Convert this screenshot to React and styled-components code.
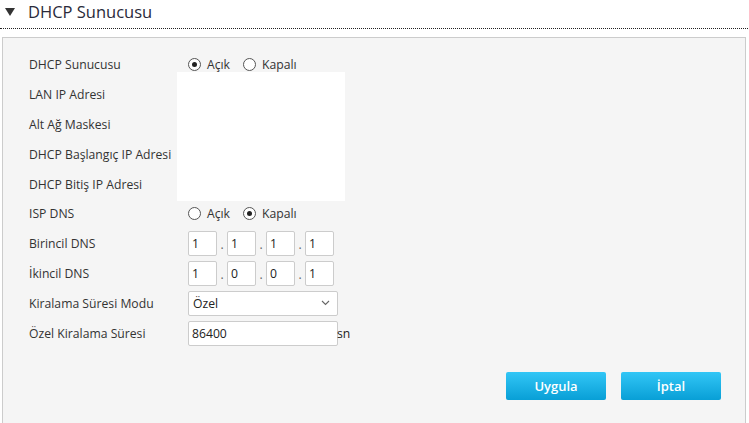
import React from 'react';
import styled, { createGlobalStyle } from 'styled-components';

const TEXT = '#333333';
const BORDER = '#cccccc';

const GlobalStyle = createGlobalStyle`
	html, body {
		margin: 0;
		padding: 0;
		background: #ffffff;
		font-family: "Open Sans", "Noto Sans", "Liberation Sans", sans-serif;
		color: ${TEXT};
	}
`;

const rows = [
	{ label: 'DHCP Sunucusu', type: 'radio', on: true },
	{ label: 'LAN IP Adresi', type: 'hidden' },
	{ label: 'Alt Ağ Maskesi', type: 'hidden' },
	{ label: 'DHCP Başlangıç IP Adresi', type: 'hidden' },
	{ label: 'DHCP Bitiş IP Adresi', type: 'hidden' },
	{ label: 'ISP DNS', type: 'radio', on: false },
	{ label: 'Birincil DNS', type: 'ip', value: ['1', '1', '1', '1'] },
	{ label: 'İkincil DNS', type: 'ip', value: ['1', '0', '0', '1'] },
	{ label: 'Kiralama Süresi Modu', type: 'select', value: 'Özel' },
	{ label: 'Özel Kiralama Süresi', type: 'text', value: '86400', unit: 'sn' }
];

export default function App() {
	return (
		<Page>
			<GlobalStyle />
			<Header>
				<Caret>
					<svg width="10" height="8" viewBox="0 0 10 8">
						<path d="M0 0 L10 0 L5 8 Z" fill="#333" />
					</svg>
				</Caret>
				<Title>DHCP Sunucusu</Title>
			</Header>
			<Panel>
				<Form>
					{rows.map((row, i) => (
						<React.Fragment key={row.label}>
							<Label>{row.label}</Label>
							{row.type === 'radio' && (
								<Field>
									<RadioOption>
										<Radio checked={row.on} />
										Açık
									</RadioOption>
									<RadioOption>
										<Radio checked={!row.on} />
										Kapalı
									</RadioOption>
								</Field>
							)}
							{row.type === 'hidden' && i === 1 && <Blank />}
							{row.type === 'ip' && (
								<Field>
									{row.value.map((v, k) => (
										<React.Fragment key={k}>
											{k > 0 && <Dot>.</Dot>}
											<Octet>{v}</Octet>
										</React.Fragment>
									))}
								</Field>
							)}
							{row.type === 'select' && (
								<Field>
									<Select>
										{row.value}
										<svg width="9" height="6" viewBox="0 0 9 6">
											<path d="M1 1 L4.5 4.5 L8 1" fill="none" stroke="#666" strokeWidth="1.1" />
										</svg>
									</Select>
								</Field>
							)}
							{row.type === 'text' && (
								<Field>
									<TextBox>{row.value}</TextBox>
									<Unit>{row.unit}</Unit>
								</Field>
							)}
						</React.Fragment>
					))}
				</Form>
				<Actions>
					<Button>Uygula</Button>
					<Button>İptal</Button>
				</Actions>
			</Panel>
		</Page>
	);
}

const Page = styled.div`
	width: 749px;
	height: 423px;
	overflow: hidden;
	display: flex;
	flex-direction: column;
`;
const Header = styled.div`
	height: 27px;
	margin: 0 1px 0 0;
	display: flex;
	align-items: center;
	border-bottom: 1px dotted #222;
	box-sizing: content-box;
	padding-bottom: 1px;
`;
const Caret = styled.span`
	width: 28px;
	padding-left: 5px;
	box-sizing: border-box;
	display: flex;
	margin-top: -4px;
`;
const Title = styled.span`
	font-size: 16.5px;
	color: #2a2a3a;
	margin-top: -5px;
`;
const Panel = styled.div`
	margin: 8px 3px 0 2px;
	flex: 1;
	background: #f5f5f5;
	border: 1px solid ${BORDER};
	border-bottom: none;
	padding: 12px 24px 0 26px;
`;
const Form = styled.div`
	display: grid;
	grid-template-columns: 159px 300px;
	grid-auto-rows: 29.8px;
	align-items: center;
	font-size: 12.2px;
`;
const Label = styled.div`
	color: ${TEXT};
	white-space: nowrap;
	grid-column: 1;
`;
const Field = styled.div`
	grid-column: 2;
	display: flex;
	align-items: center;
`;
const Blank = styled.div`
	grid-column: 2;
	grid-row: 2 / span 4;
	align-self: start;
	background: #ffffff;
	width: 168px;
	height: 129px;
	margin: -8px 0 0 -11px;
`;
const RadioOption = styled.label`
	display: flex;
	align-items: center;
	margin-right: 13px;
	color: ${TEXT};
`;
const Radio = styled.span`
	width: 11px;
	height: 11px;
	border: 1px solid #555;
	border-radius: 50%;
	background: #fff;
	margin-right: 6px;
	position: relative;
	&::after {
		content: '';
		display: ${(props) => (props.checked ? 'block' : 'none')};
		position: absolute;
		left: 3px;
		top: 3px;
		width: 5px;
		height: 5px;
		border-radius: 50%;
		background: #222;
	}
`;
const Octet = styled.div`
	width: 29px;
	height: 25px;
	box-sizing: border-box;
	border: 1px solid ${BORDER};
	border-radius: 2px;
	background: #fff;
	padding-left: 3px;
	display: flex;
	align-items: center;
	color: #222;
`;
const Dot = styled.span`
	width: 10px;
	text-align: center;
	align-self: flex-end;
	margin-bottom: 3px;
	color: #666;
`;
const Select = styled.div`
	width: 150px;
	height: 25px;
	box-sizing: border-box;
	border: 1px solid ${BORDER};
	border-radius: 2px;
	background: #fff;
	padding: 0 7px 0 4px;
	display: flex;
	align-items: center;
	justify-content: space-between;
	color: #222;
`;
const TextBox = styled.div`
	width: 150px;
	height: 25px;
	box-sizing: border-box;
	border: 1px solid ${BORDER};
	border-radius: 2px;
	background: #fff;
	padding-left: 3px;
	display: flex;
	align-items: center;
	color: #222;
`;
const Unit = styled.span`
	margin-left: -1px;
	color: #222;
`;
const Actions = styled.div`
	display: flex;
	justify-content: flex-end;
	gap: 15px;
	margin-top: 24px;
`;
const Button = styled.div`
	width: 100px;
	height: 28px;
	border-radius: 2px;
	background: linear-gradient(to bottom, #32c6f6, #089fd6);
	color: #fff;
	font-size: 13px;
	font-weight: 600;
	display: flex;
	align-items: center;
	justify-content: center;
`;
